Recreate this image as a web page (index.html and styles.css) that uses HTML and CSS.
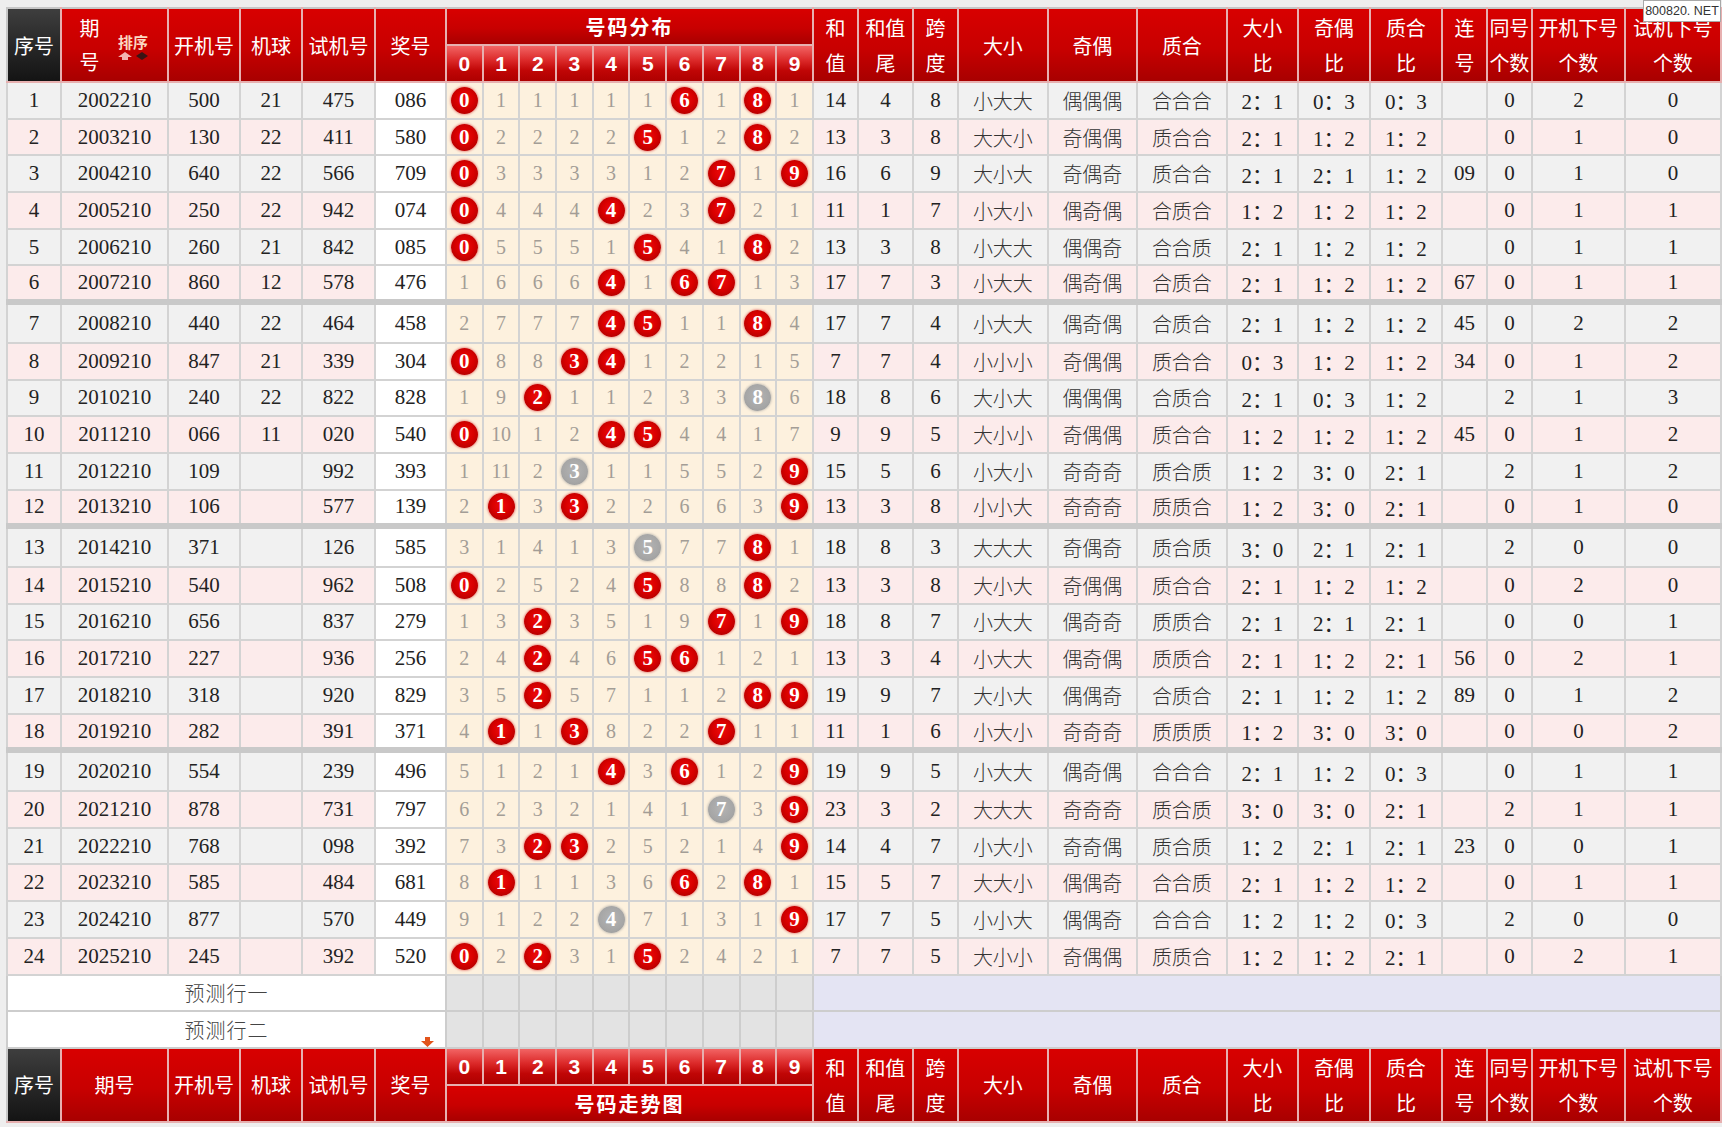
FILE: index.html
```html
<!DOCTYPE html>
<html lang="zh-CN">
<head>
<meta charset="utf-8">
<title>号码分布走势图</title>
<link rel="stylesheet" href="styles.css">
</head>
<body>
<div class="page">
<div class="mark">800820. NET</div>
<table class="grid">
<colgroup>
<col class="c54"><col class="c107"><col class="c72"><col class="c62"><col class="c73"><col class="c71">
<col class="cn"><col class="cn"><col class="cn"><col class="cn"><col class="cn"><col class="cn"><col class="cn"><col class="cn"><col class="cn"><col class="cn">
<col class="c45"><col class="c55"><col class="c45"><col class="c90"><col class="c89"><col class="c90"><col class="c71"><col class="c72"><col class="c72"><col class="c45"><col class="c45"><col class="c93"><col class="c96">
</colgroup>
<thead>
<tr class="hr">
<th rowspan="2" class="hk">序号</th>
<th rowspan="2" class="h"><div class="qh"><span class="qh-t">期<br>号</span><span class="sort"><b>排序</b><span class="arr"><svg width="16" height="8" viewBox="0 0 16 8"><path d="M8 0 L15 5 H11 V8 H5 V5 H1 Z" fill="#f3b4b0"/></svg><svg width="16" height="8" viewBox="0 0 16 8"><path d="M8 0 L14 4 L8 8 L2 4 Z" fill="#3a1414"/></svg></span></span></div></th>
<th rowspan="2" class="h">开机号</th>
<th rowspan="2" class="h">机球</th>
<th rowspan="2" class="h">试机号</th>
<th rowspan="2" class="h">奖号</th>
<th colspan="10" class="h hg">号码分布</th>
<th rowspan="2" class="h">和<br>值</th>
<th rowspan="2" class="h">和值<br>尾</th>
<th rowspan="2" class="h">跨<br>度</th>
<th rowspan="2" class="h">大小</th>
<th rowspan="2" class="h">奇偶</th>
<th rowspan="2" class="h">质合</th>
<th rowspan="2" class="h">大小<br>比</th>
<th rowspan="2" class="h">奇偶<br>比</th>
<th rowspan="2" class="h">质合<br>比</th>
<th rowspan="2" class="h">连<br>号</th>
<th rowspan="2" class="h">同号<br>个数</th>
<th rowspan="2" class="h">开机下号<br>个数</th>
<th rowspan="2" class="h">试机下号<br>个数</th>
</tr>
<tr class="hr">
<th class="hn">0</th><th class="hn">1</th><th class="hn">2</th><th class="hn">3</th><th class="hn">4</th><th class="hn">5</th><th class="hn">6</th><th class="hn">7</th><th class="hn">8</th><th class="hn">9</th>
</tr>
</thead>
<tbody class="data">
<tr class="g"><td>1</td><td>2002210</td><td>500</td><td>21</td><td>475</td><td class="j">086</td><td class="n"><span class="b">0</span></td><td class="n">1</td><td class="n">1</td><td class="n">1</td><td class="n">1</td><td class="n">1</td><td class="n"><span class="b">6</span></td><td class="n">1</td><td class="n"><span class="b">8</span></td><td class="n">1</td><td>14</td><td>4</td><td>8</td><td class="z">小大大</td><td class="z">偶偶偶</td><td class="z">合合合</td><td>2：1</td><td>0：3</td><td>0：3</td><td></td><td>0</td><td>2</td><td>0</td></tr>
<tr class="p"><td>2</td><td>2003210</td><td>130</td><td>22</td><td>411</td><td class="j">580</td><td class="n"><span class="b">0</span></td><td class="n">2</td><td class="n">2</td><td class="n">2</td><td class="n">2</td><td class="n"><span class="b">5</span></td><td class="n">1</td><td class="n">2</td><td class="n"><span class="b">8</span></td><td class="n">2</td><td>13</td><td>3</td><td>8</td><td class="z">大大小</td><td class="z">奇偶偶</td><td class="z">质合合</td><td>2：1</td><td>1：2</td><td>1：2</td><td></td><td>0</td><td>1</td><td>0</td></tr>
<tr class="g"><td>3</td><td>2004210</td><td>640</td><td>22</td><td>566</td><td class="j">709</td><td class="n"><span class="b">0</span></td><td class="n">3</td><td class="n">3</td><td class="n">3</td><td class="n">3</td><td class="n">1</td><td class="n">2</td><td class="n"><span class="b">7</span></td><td class="n">1</td><td class="n"><span class="b">9</span></td><td>16</td><td>6</td><td>9</td><td class="z">大小大</td><td class="z">奇偶奇</td><td class="z">质合合</td><td>2：1</td><td>2：1</td><td>1：2</td><td>09</td><td>0</td><td>1</td><td>0</td></tr>
<tr class="p"><td>4</td><td>2005210</td><td>250</td><td>22</td><td>942</td><td class="j">074</td><td class="n"><span class="b">0</span></td><td class="n">4</td><td class="n">4</td><td class="n">4</td><td class="n"><span class="b">4</span></td><td class="n">2</td><td class="n">3</td><td class="n"><span class="b">7</span></td><td class="n">2</td><td class="n">1</td><td>11</td><td>1</td><td>7</td><td class="z">小大小</td><td class="z">偶奇偶</td><td class="z">合质合</td><td>1：2</td><td>1：2</td><td>1：2</td><td></td><td>0</td><td>1</td><td>1</td></tr>
<tr class="g"><td>5</td><td>2006210</td><td>260</td><td>21</td><td>842</td><td class="j">085</td><td class="n"><span class="b">0</span></td><td class="n">5</td><td class="n">5</td><td class="n">5</td><td class="n">1</td><td class="n"><span class="b">5</span></td><td class="n">4</td><td class="n">1</td><td class="n"><span class="b">8</span></td><td class="n">2</td><td>13</td><td>3</td><td>8</td><td class="z">小大大</td><td class="z">偶偶奇</td><td class="z">合合质</td><td>2：1</td><td>1：2</td><td>1：2</td><td></td><td>0</td><td>1</td><td>1</td></tr>
<tr class="p"><td>6</td><td>2007210</td><td>860</td><td>12</td><td>578</td><td class="j">476</td><td class="n">1</td><td class="n">6</td><td class="n">6</td><td class="n">6</td><td class="n"><span class="b">4</span></td><td class="n">1</td><td class="n"><span class="b">6</span></td><td class="n"><span class="b">7</span></td><td class="n">1</td><td class="n">3</td><td>17</td><td>7</td><td>3</td><td class="z">小大大</td><td class="z">偶奇偶</td><td class="z">合质合</td><td>2：1</td><td>1：2</td><td>1：2</td><td>67</td><td>0</td><td>1</td><td>1</td></tr>
<tr class="g sep"><td>7</td><td>2008210</td><td>440</td><td>22</td><td>464</td><td class="j">458</td><td class="n">2</td><td class="n">7</td><td class="n">7</td><td class="n">7</td><td class="n"><span class="b">4</span></td><td class="n"><span class="b">5</span></td><td class="n">1</td><td class="n">1</td><td class="n"><span class="b">8</span></td><td class="n">4</td><td>17</td><td>7</td><td>4</td><td class="z">小大大</td><td class="z">偶奇偶</td><td class="z">合质合</td><td>2：1</td><td>1：2</td><td>1：2</td><td>45</td><td>0</td><td>2</td><td>2</td></tr>
<tr class="p"><td>8</td><td>2009210</td><td>847</td><td>21</td><td>339</td><td class="j">304</td><td class="n"><span class="b">0</span></td><td class="n">8</td><td class="n">8</td><td class="n"><span class="b">3</span></td><td class="n"><span class="b">4</span></td><td class="n">1</td><td class="n">2</td><td class="n">2</td><td class="n">1</td><td class="n">5</td><td>7</td><td>7</td><td>4</td><td class="z">小小小</td><td class="z">奇偶偶</td><td class="z">质合合</td><td>0：3</td><td>1：2</td><td>1：2</td><td>34</td><td>0</td><td>1</td><td>2</td></tr>
<tr class="g"><td>9</td><td>2010210</td><td>240</td><td>22</td><td>822</td><td class="j">828</td><td class="n">1</td><td class="n">9</td><td class="n"><span class="b">2</span></td><td class="n">1</td><td class="n">1</td><td class="n">2</td><td class="n">3</td><td class="n">3</td><td class="n"><span class="b gb">8</span></td><td class="n">6</td><td>18</td><td>8</td><td>6</td><td class="z">大小大</td><td class="z">偶偶偶</td><td class="z">合质合</td><td>2：1</td><td>0：3</td><td>1：2</td><td></td><td>2</td><td>1</td><td>3</td></tr>
<tr class="p"><td>10</td><td>2011210</td><td>066</td><td>11</td><td>020</td><td class="j">540</td><td class="n"><span class="b">0</span></td><td class="n">10</td><td class="n">1</td><td class="n">2</td><td class="n"><span class="b">4</span></td><td class="n"><span class="b">5</span></td><td class="n">4</td><td class="n">4</td><td class="n">1</td><td class="n">7</td><td>9</td><td>9</td><td>5</td><td class="z">大小小</td><td class="z">奇偶偶</td><td class="z">质合合</td><td>1：2</td><td>1：2</td><td>1：2</td><td>45</td><td>0</td><td>1</td><td>2</td></tr>
<tr class="g"><td>11</td><td>2012210</td><td>109</td><td></td><td>992</td><td class="j">393</td><td class="n">1</td><td class="n">11</td><td class="n">2</td><td class="n"><span class="b gb">3</span></td><td class="n">1</td><td class="n">1</td><td class="n">5</td><td class="n">5</td><td class="n">2</td><td class="n"><span class="b">9</span></td><td>15</td><td>5</td><td>6</td><td class="z">小大小</td><td class="z">奇奇奇</td><td class="z">质合质</td><td>1：2</td><td>3：0</td><td>2：1</td><td></td><td>2</td><td>1</td><td>2</td></tr>
<tr class="p"><td>12</td><td>2013210</td><td>106</td><td></td><td>577</td><td class="j">139</td><td class="n">2</td><td class="n"><span class="b">1</span></td><td class="n">3</td><td class="n"><span class="b">3</span></td><td class="n">2</td><td class="n">2</td><td class="n">6</td><td class="n">6</td><td class="n">3</td><td class="n"><span class="b">9</span></td><td>13</td><td>3</td><td>8</td><td class="z">小小大</td><td class="z">奇奇奇</td><td class="z">质质合</td><td>1：2</td><td>3：0</td><td>2：1</td><td></td><td>0</td><td>1</td><td>0</td></tr>
<tr class="g sep"><td>13</td><td>2014210</td><td>371</td><td></td><td>126</td><td class="j">585</td><td class="n">3</td><td class="n">1</td><td class="n">4</td><td class="n">1</td><td class="n">3</td><td class="n"><span class="b gb">5</span></td><td class="n">7</td><td class="n">7</td><td class="n"><span class="b">8</span></td><td class="n">1</td><td>18</td><td>8</td><td>3</td><td class="z">大大大</td><td class="z">奇偶奇</td><td class="z">质合质</td><td>3：0</td><td>2：1</td><td>2：1</td><td></td><td>2</td><td>0</td><td>0</td></tr>
<tr class="p"><td>14</td><td>2015210</td><td>540</td><td></td><td>962</td><td class="j">508</td><td class="n"><span class="b">0</span></td><td class="n">2</td><td class="n">5</td><td class="n">2</td><td class="n">4</td><td class="n"><span class="b">5</span></td><td class="n">8</td><td class="n">8</td><td class="n"><span class="b">8</span></td><td class="n">2</td><td>13</td><td>3</td><td>8</td><td class="z">大小大</td><td class="z">奇偶偶</td><td class="z">质合合</td><td>2：1</td><td>1：2</td><td>1：2</td><td></td><td>0</td><td>2</td><td>0</td></tr>
<tr class="g"><td>15</td><td>2016210</td><td>656</td><td></td><td>837</td><td class="j">279</td><td class="n">1</td><td class="n">3</td><td class="n"><span class="b">2</span></td><td class="n">3</td><td class="n">5</td><td class="n">1</td><td class="n">9</td><td class="n"><span class="b">7</span></td><td class="n">1</td><td class="n"><span class="b">9</span></td><td>18</td><td>8</td><td>7</td><td class="z">小大大</td><td class="z">偶奇奇</td><td class="z">质质合</td><td>2：1</td><td>2：1</td><td>2：1</td><td></td><td>0</td><td>0</td><td>1</td></tr>
<tr class="p"><td>16</td><td>2017210</td><td>227</td><td></td><td>936</td><td class="j">256</td><td class="n">2</td><td class="n">4</td><td class="n"><span class="b">2</span></td><td class="n">4</td><td class="n">6</td><td class="n"><span class="b">5</span></td><td class="n"><span class="b">6</span></td><td class="n">1</td><td class="n">2</td><td class="n">1</td><td>13</td><td>3</td><td>4</td><td class="z">小大大</td><td class="z">偶奇偶</td><td class="z">质质合</td><td>2：1</td><td>1：2</td><td>2：1</td><td>56</td><td>0</td><td>2</td><td>1</td></tr>
<tr class="g"><td>17</td><td>2018210</td><td>318</td><td></td><td>920</td><td class="j">829</td><td class="n">3</td><td class="n">5</td><td class="n"><span class="b">2</span></td><td class="n">5</td><td class="n">7</td><td class="n">1</td><td class="n">1</td><td class="n">2</td><td class="n"><span class="b">8</span></td><td class="n"><span class="b">9</span></td><td>19</td><td>9</td><td>7</td><td class="z">大小大</td><td class="z">偶偶奇</td><td class="z">合质合</td><td>2：1</td><td>1：2</td><td>1：2</td><td>89</td><td>0</td><td>1</td><td>2</td></tr>
<tr class="p"><td>18</td><td>2019210</td><td>282</td><td></td><td>391</td><td class="j">371</td><td class="n">4</td><td class="n"><span class="b">1</span></td><td class="n">1</td><td class="n"><span class="b">3</span></td><td class="n">8</td><td class="n">2</td><td class="n">2</td><td class="n"><span class="b">7</span></td><td class="n">1</td><td class="n">1</td><td>11</td><td>1</td><td>6</td><td class="z">小大小</td><td class="z">奇奇奇</td><td class="z">质质质</td><td>1：2</td><td>3：0</td><td>3：0</td><td></td><td>0</td><td>0</td><td>2</td></tr>
<tr class="g sep"><td>19</td><td>2020210</td><td>554</td><td></td><td>239</td><td class="j">496</td><td class="n">5</td><td class="n">1</td><td class="n">2</td><td class="n">1</td><td class="n"><span class="b">4</span></td><td class="n">3</td><td class="n"><span class="b">6</span></td><td class="n">1</td><td class="n">2</td><td class="n"><span class="b">9</span></td><td>19</td><td>9</td><td>5</td><td class="z">小大大</td><td class="z">偶奇偶</td><td class="z">合合合</td><td>2：1</td><td>1：2</td><td>0：3</td><td></td><td>0</td><td>1</td><td>1</td></tr>
<tr class="p"><td>20</td><td>2021210</td><td>878</td><td></td><td>731</td><td class="j">797</td><td class="n">6</td><td class="n">2</td><td class="n">3</td><td class="n">2</td><td class="n">1</td><td class="n">4</td><td class="n">1</td><td class="n"><span class="b gb">7</span></td><td class="n">3</td><td class="n"><span class="b">9</span></td><td>23</td><td>3</td><td>2</td><td class="z">大大大</td><td class="z">奇奇奇</td><td class="z">质合质</td><td>3：0</td><td>3：0</td><td>2：1</td><td></td><td>2</td><td>1</td><td>1</td></tr>
<tr class="g"><td>21</td><td>2022210</td><td>768</td><td></td><td>098</td><td class="j">392</td><td class="n">7</td><td class="n">3</td><td class="n"><span class="b">2</span></td><td class="n"><span class="b">3</span></td><td class="n">2</td><td class="n">5</td><td class="n">2</td><td class="n">1</td><td class="n">4</td><td class="n"><span class="b">9</span></td><td>14</td><td>4</td><td>7</td><td class="z">小大小</td><td class="z">奇奇偶</td><td class="z">质合质</td><td>1：2</td><td>2：1</td><td>2：1</td><td>23</td><td>0</td><td>0</td><td>1</td></tr>
<tr class="p"><td>22</td><td>2023210</td><td>585</td><td></td><td>484</td><td class="j">681</td><td class="n">8</td><td class="n"><span class="b">1</span></td><td class="n">1</td><td class="n">1</td><td class="n">3</td><td class="n">6</td><td class="n"><span class="b">6</span></td><td class="n">2</td><td class="n"><span class="b">8</span></td><td class="n">1</td><td>15</td><td>5</td><td>7</td><td class="z">大大小</td><td class="z">偶偶奇</td><td class="z">合合质</td><td>2：1</td><td>1：2</td><td>1：2</td><td></td><td>0</td><td>1</td><td>1</td></tr>
<tr class="g"><td>23</td><td>2024210</td><td>877</td><td></td><td>570</td><td class="j">449</td><td class="n">9</td><td class="n">1</td><td class="n">2</td><td class="n">2</td><td class="n"><span class="b gb">4</span></td><td class="n">7</td><td class="n">1</td><td class="n">3</td><td class="n">1</td><td class="n"><span class="b">9</span></td><td>17</td><td>7</td><td>5</td><td class="z">小小大</td><td class="z">偶偶奇</td><td class="z">合合合</td><td>1：2</td><td>1：2</td><td>0：3</td><td></td><td>2</td><td>0</td><td>0</td></tr>
<tr class="p"><td>24</td><td>2025210</td><td>245</td><td></td><td>392</td><td class="j">520</td><td class="n"><span class="b">0</span></td><td class="n">2</td><td class="n"><span class="b">2</span></td><td class="n">3</td><td class="n">1</td><td class="n"><span class="b">5</span></td><td class="n">2</td><td class="n">4</td><td class="n">2</td><td class="n">1</td><td>7</td><td>7</td><td>5</td><td class="z">大小小</td><td class="z">奇偶偶</td><td class="z">质质合</td><td>1：2</td><td>1：2</td><td>2：1</td><td></td><td>0</td><td>2</td><td>1</td></tr>
</tbody>
<tbody class="pred">
<tr><td colspan="6" class="pl">预测行一</td><td class="pn"></td><td class="pn"></td><td class="pn"></td><td class="pn"></td><td class="pn"></td><td class="pn"></td><td class="pn"></td><td class="pn"></td><td class="pn"></td><td class="pn"></td><td colspan="13" class="pz"></td></tr>
<tr><td colspan="6" class="pl">预测行二<svg class="down" width="13" height="10" viewBox="0 0 13 10"><path d="M4 0 H9 V4 H13 L6.5 10 L0 4 H4 Z" fill="#e2541c"/></svg></td><td class="pn"></td><td class="pn"></td><td class="pn"></td><td class="pn"></td><td class="pn"></td><td class="pn"></td><td class="pn"></td><td class="pn"></td><td class="pn"></td><td class="pn"></td><td colspan="13" class="pz"></td></tr>
</tbody>
<tbody class="foot">
<tr class="hr">
<th rowspan="2" class="hk">序号</th>
<th rowspan="2" class="h">期号</th>
<th rowspan="2" class="h">开机号</th>
<th rowspan="2" class="h">机球</th>
<th rowspan="2" class="h">试机号</th>
<th rowspan="2" class="h">奖号</th>
<th class="hn">0</th><th class="hn">1</th><th class="hn">2</th><th class="hn">3</th><th class="hn">4</th><th class="hn">5</th><th class="hn">6</th><th class="hn">7</th><th class="hn">8</th><th class="hn">9</th>
<th rowspan="2" class="h">和<br>值</th>
<th rowspan="2" class="h">和值<br>尾</th>
<th rowspan="2" class="h">跨<br>度</th>
<th rowspan="2" class="h">大小</th>
<th rowspan="2" class="h">奇偶</th>
<th rowspan="2" class="h">质合</th>
<th rowspan="2" class="h">大小<br>比</th>
<th rowspan="2" class="h">奇偶<br>比</th>
<th rowspan="2" class="h">质合<br>比</th>
<th rowspan="2" class="h">连<br>号</th>
<th rowspan="2" class="h">同号<br>个数</th>
<th rowspan="2" class="h">开机下号<br>个数</th>
<th rowspan="2" class="h">试机下号<br>个数</th>
</tr>
<tr class="hr2">
<th colspan="10" class="h hg">号码走势图</th>
</tr>
</tbody>
</table>
</div>
</body>
</html>
```
FILE: styles.css
```css
html, body {
  margin: 0;
  padding: 0;
}
body {
  background: #eeeeee;
  font-family: "Liberation Serif", "Noto Sans CJK SC", serif;
  color: #222;
}
.page {
  position: relative;
  padding: 7px 0 0 6px;
}
.mark {
  position: absolute;
  top: 0;
  right: 1px;
  width: 76px;
  height: 20px;
  background: #fff;
  border: 1px solid #a8a8a8;
  color: #333;
  font: 12.5px/20px "Liberation Sans", sans-serif;
  text-align: center;
  z-index: 2;
}
.grid {
  border-collapse: collapse;
  table-layout: fixed;
  width: 1714px;
}
.c54 { width: 54px; }
.c107 { width: 107px; }
.c72 { width: 72px; }
.c62 { width: 62px; }
.c73 { width: 73px; }
.c71 { width: 71px; }
.cn { width: 36.7px; }
.c45 { width: 45px; }
.c55 { width: 55px; }
.c90 { width: 90px; }
.c89 { width: 89px; }
.c93 { width: 93px; }
.c96 { width: 96px; }

th {
  padding: 0;
  color: #fff;
  font-family: "Noto Sans CJK SC", sans-serif;
  font-weight: 400;
  font-size: 20px;
  line-height: 35px;
  border: 2px solid #e7b0b0;
  text-align: center;
  white-space: nowrap;
  overflow: hidden;
}
thead tr:first-child th {
  border-top-color: #c6c6c6;
}
.hr { height: 37px; }
.hr2 { height: 36px; }
.h {
  background: linear-gradient(#d80000 0%, #c80000 55%, #a80000 100%);
}
.hk {
  background: linear-gradient(#3e3e3e 0%, #262626 55%, #141414 100%);
  border-left-color: #c6c6c6;
}
.hn {
  background: linear-gradient(#f26464 0%, #dc2a2a 40%, #c00606 70%, #ae0000 100%);
  font-family: "Liberation Sans", sans-serif;
  font-weight: 700;
  font-size: 21px;
}
.hg {
  font-weight: 700;
  letter-spacing: 2px;
}
.qh {
  display: flex;
  align-items: center;
  justify-content: center;
  gap: 17px;
}
.qh-t {
  line-height: 34px;
}
.sort {
  display: flex;
  flex-direction: column;
  align-items: center;
  line-height: 16px;
  padding-top: 4px;
}
.sort b {
  font-size: 15px;
  color: #fbd8c2;
  letter-spacing: 0;
}
.arr {
  display: flex;
  gap: 1px;
  margin-top: 2px;
}
.arr svg { display: block; }

td {
  padding: 0;
  border: 2px solid #d3d3d3;
  text-align: center;
  font-size: 21px;
  color: #222;
  white-space: nowrap;
}
.data tr { height: 36.7px; }
.data tr.sep { height: 40.7px; }
.data tr.sep td { border-top: 6px solid #c9c9c9; }
.g td { background: #f1f1f1; }
.p td { background: #fcebeb; }
.g td.j, .p td.j { background: #fff; }
.g td.n, .p td.n {
  background: #fdf1de;
  color: #a39d96;
  font-size: 20px;
}
td.z {
  font-family: "Noto Sans CJK SC", sans-serif;
  font-weight: 300;
  font-size: 20px;
  color: #333;
}
.b {
  display: inline-block;
  width: 27px;
  height: 27px;
  line-height: 27px;
  border-radius: 50%;
  vertical-align: middle;
  background: radial-gradient(circle at 50% 45%, #ee0a0a 0%, #d80000 45%, #b20000 80%, #9a0000 100%);
  box-shadow: 0 0 2px 1px rgba(220, 60, 60, 0.45);
  color: #fff;
  font-family: "Liberation Serif", serif;
  font-weight: 700;
  font-size: 21px;
}
.b.gb {
  background: radial-gradient(circle at 50% 45%, #b4b4b4 0%, #a6a6a6 60%, #969696 100%);
  box-shadow: 0 0 2px 1px rgba(150, 150, 150, 0.4);
}
.pred tr { height: 36.5px; }
.pred td { border-color: #cdcdcd; }
td.pl {
  background: #fff;
  color: #444;
  font-family: "Noto Sans CJK SC", sans-serif;
  font-weight: 300;
  font-size: 20px;
  letter-spacing: 1px;
  position: relative;
}
td.pn { background: #e3e3e3; }
td.pz { background: #e4e4f3; }
.down {
  position: absolute;
  right: 11px;
  bottom: 0;
}
```
